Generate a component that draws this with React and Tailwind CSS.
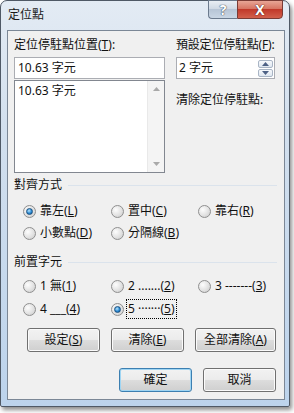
import React from 'react'

const K = ({ children }) => <span className="underline underline-offset-[1px]">{children}</span>

function Radio({ checked }) {
  return (
    <span className="w-[13px] h-[13px] shrink-0 rounded-full border border-[#8f8f8f] bg-[radial-gradient(circle_at_35%_35%,#fdfdfd,#e2e2e2_55%,#c8c8c8)] flex items-center justify-center">
      {checked && (
        <span className="w-[7px] h-[7px] rounded-full border border-[#1c5180] bg-[radial-gradient(circle_at_40%_35%,#b9e4fb,#2a8ad4_55%,#0c4e8b)]" />
      )}
    </span>
  )
}

function Opt({ checked, focus, w, children }) {
  return (
    <div className={`flex items-center gap-[4px] whitespace-nowrap ${w}`}>
      <Radio checked={checked} />
      <span className={focus ? 'outline-1 outline-dotted outline-black outline-offset-[1px]' : ''}>{children}</span>
    </div>
  )
}

function Btn({ w, primary, children }) {
  return (
    <div
      className={`h-[24px] ${w} rounded-[3px] border flex items-center justify-center whitespace-nowrap bg-[linear-gradient(#f2f2f2,#ebebeb_50%,#dddddd_50%,#cfcfcf)] ${
        primary ? 'border-[#3c7fb1] shadow-[inset_0_0_0_1px_#9fd5f3]' : 'border-[#707070] shadow-[inset_0_0_0_1px_#fbfbfb]'
      }`}
    >
      {children}
    </div>
  )
}

function Group({ title }) {
  return (
    <div className="flex items-center h-[16px]">
      <span>{title}</span>
      <div className="flex-1 h-px bg-[#dbe3ec] ml-[6px] mr-[-1px]" />
    </div>
  )
}

const Tri = ({ up, color }) => (
  <svg width="7" height="4" viewBox="0 0 7 4">
    <path d={up ? 'M0 4 L3.5 0 L7 4Z' : 'M0 0 L3.5 4 L7 0Z'} fill={color} />
  </svg>
)

export default function App() {
  return (
    <div className="w-[294px] h-[413px] bg-white font-['Noto_Sans','Noto_Sans_CJK_TC',sans-serif] text-[12px] leading-[16px] text-[#111]">
      <div className="w-[290px] h-[407px] rounded-t-[7px] rounded-b-[2px] border border-[#4f5966] bg-[linear-gradient(#e3ebf4,#d3e0ee_30%,#bcd3ec)] shadow-[2px_3px_4px_rgba(0,0,0,0.45)] flex flex-col">
        <div className="h-[29px] flex items-start justify-between pl-[7px] pr-[6px]">
          <span className="mt-[6px] text-[#1a1a1a]">定位點</span>
          <div className="flex -mt-[1px]">
            <div className="w-[29px] h-[19px] rounded-bl-[4px] border border-[#6b7a8d] border-r-0 bg-[linear-gradient(#e9eef4,#cdd7e3_50%,#b7c5d6_50%,#c9d6e4)] flex items-center justify-center text-white font-bold text-[14px] [text-shadow:0_0_1px_#2c3a4e,0_0_1px_#2c3a4e]">
              ?
            </div>
            <div className="w-[46px] h-[19px] rounded-br-[4px] border border-[#7a3b35] bg-[linear-gradient(#e8a595,#d5705e_50%,#c1392a_50%,#d2604c)] flex items-center justify-center text-white font-bold text-[14px] [text-shadow:0_0_1px_#4a1410,0_0_1px_#4a1410]">
              X
            </div>
          </div>
        </div>

        <div className="mx-[6px] mr-[4px] h-[370px] border border-[#7b8796] bg-[#f0f0f0] pt-[6px] pl-[6px] pr-[8px]">
          <div className="flex">
            <div className="w-[151px]">
              <div className="h-[16px] whitespace-nowrap">定位停駐點位置(<K>T</K>):</div>
              <div className="mt-[4px] h-[22px] border border-[#abadb3] bg-white pl-[3px] flex items-center">10.63 字元</div>
              <div className="mt-[1px] h-[93px] border border-[#828790] bg-white flex">
                <div className="flex-1 pl-[3px] pt-[2px]">10.63 字元</div>
                <div className="w-[17px] border-l border-[#e9e9e9] bg-[#f4f4f4] flex flex-col items-center justify-between pt-[6px] pb-[6px]">
                  <Tri up color="#a9a9a9" />
                  <Tri color="#a9a9a9" />
                </div>
              </div>
            </div>
            <div className="ml-[11px] w-[99px]">
              <div className="h-[16px] whitespace-nowrap tracking-[-0.2px]">預設定位停駐點(<K>F</K>):</div>
              <div className="mt-[4px] h-[22px] border border-[#abadb3] bg-white pl-[2px] pr-[1px] flex items-center justify-between">
                <span>2 字元</span>
                <div className="flex flex-col gap-[1px]">
                  <div className="w-[15px] h-[8px] border border-[#a9b5c5] rounded-[2px] bg-[linear-gradient(#f7f9fc,#dfe7f0)] flex items-center justify-center">
                    <Tri up color="#4d6185" />
                  </div>
                  <div className="w-[15px] h-[8px] border border-[#a9b5c5] rounded-[2px] bg-[linear-gradient(#f7f9fc,#dfe7f0)] flex items-center justify-center">
                    <Tri color="#4d6185" />
                  </div>
                </div>
              </div>
              <div className="mt-[13px] h-[16px] whitespace-nowrap">清除定位停駐點:</div>
            </div>
          </div>

          <div className="mt-[4px]">
            <Group title="對齊方式" />
          </div>
          <div className="flex pl-[9px] mt-[10px] h-[16px]">
            <Opt checked w="w-[88px]">靠左(<K>L</K>)</Opt>
            <Opt w="w-[87px]">置中(<K>C</K>)</Opt>
            <Opt w="flex-1">靠右(<K>R</K>)</Opt>
          </div>
          <div className="flex pl-[9px] mt-[6px] h-[16px]">
            <Opt w="w-[88px]">小數點(<K>D</K>)</Opt>
            <Opt w="w-[87px]">分隔線(<K>B</K>)</Opt>
          </div>

          <div className="mt-[13px]">
            <Group title="前置字元" />
          </div>
          <div className="flex pl-[9px] mt-[8px] h-[16px]">
            <Opt w="w-[88px]">1 無(<K>1</K>)</Opt>
            <Opt w="w-[87px]">2 .......(<K>2</K>)</Opt>
            <Opt w="flex-1">3 -------(<K>3</K>)</Opt>
          </div>
          <div className="flex pl-[9px] mt-[7px] h-[16px]">
            <Opt w="w-[88px]">4 ___(<K>4</K>)</Opt>
            <Opt checked focus w="w-[87px]">5 ·······(<K>5</K>)</Opt>
          </div>

          <div className="flex gap-[11px] pl-[13px] mt-[11px]">
            <Btn w="w-[73px]">設定(<K>S</K>)</Btn>
            <Btn w="w-[73px]">清除(<K>E</K>)</Btn>
            <Btn w="w-[81px]">全部清除(<K>A</K>)</Btn>
          </div>
          <div className="flex gap-[11px] justify-end mt-[16px]">
            <Btn primary w="w-[73px]">確定</Btn>
            <Btn w="w-[73px]">取消</Btn>
          </div>
        </div>
      </div>
    </div>
  )
}
